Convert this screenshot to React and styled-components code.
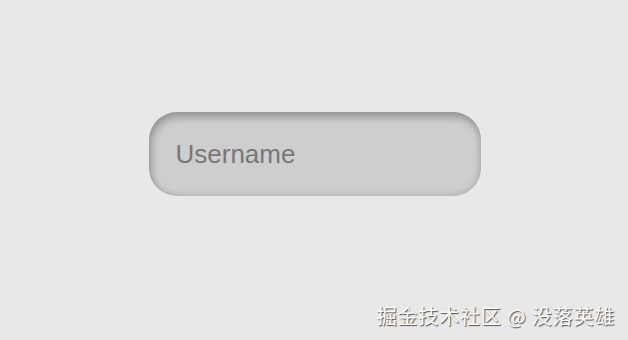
import React from "react";
import styled, { createGlobalStyle } from "styled-components";

const GlobalStyle = createGlobalStyle`
  html, body {
    margin: 0;
    padding: 0;
    background: #e8e8e8;
    font-family: "Liberation Sans", Arial, sans-serif;
  }
`;

const Page = styled.main`
  position: relative;
  width: 628px;
  height: 340px;
  display: flex;
  justify-content: center;
  padding-top: 112px;
  padding-left: 1px;
  box-sizing: border-box;
  overflow: hidden;
`;

const Field = styled.input`
  width: 332px;
  height: 84px;
  box-sizing: border-box;
  padding: 0 24px 0 27px;
  border: none;
  outline: none;
  border-radius: 28px;
  background: #cecece;
  box-shadow: inset 2px 5px 9px rgba(0, 0, 0, 0.28),
    inset -1px -2px 6px rgba(0, 0, 0, 0.1);
  font-family: "Liberation Sans", Arial, sans-serif;
  font-size: 26px;
  color: #555;

  &::placeholder {
    color: #777;
  }
`;

const Watermark = styled.span`
  position: absolute;
  right: 13px;
  bottom: 12px;
  font-family: "Noto Sans CJK SC", "Liberation Sans", sans-serif;
  font-size: 20px;
  line-height: 1.2;
  color: #fafafa;
  text-shadow: 1px 1px 1px rgba(0, 0, 0, 0.65);
  letter-spacing: 0.8px;
`;

export default function App() {
  return (
    <>
      <GlobalStyle />
      <Page>
        <Field type="text" placeholder="Username" />
        <Watermark>掘金技术社区 @ 没落英雄</Watermark>
      </Page>
    </>
  );
}
